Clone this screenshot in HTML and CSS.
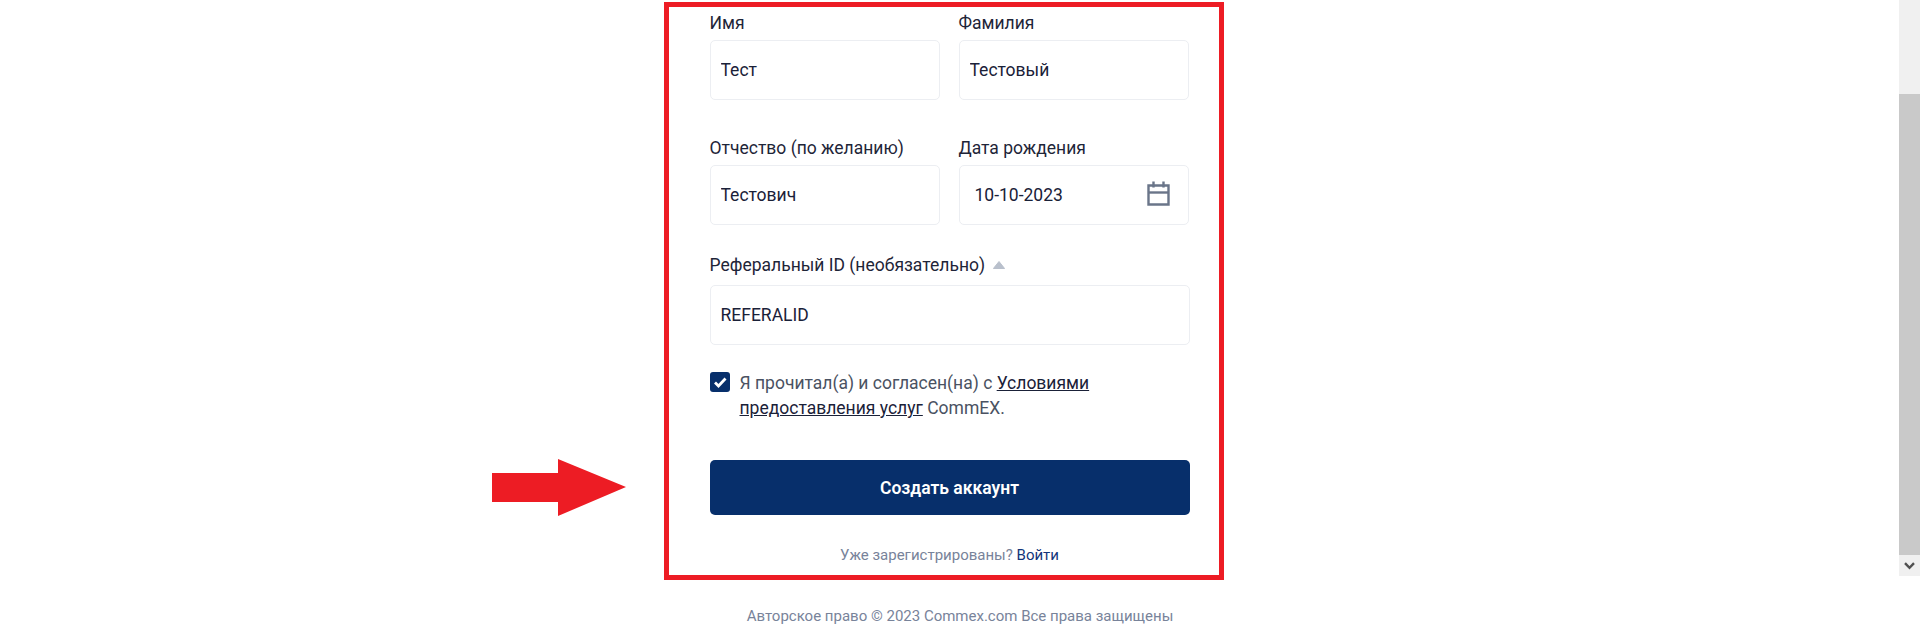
FILE: index.html
```html
<!DOCTYPE html>
<html lang="ru">
<head>
  <meta charset="UTF-8">
  <meta name="viewport" content="width=device-width, initial-scale=1.0">
  <title>Регистрация</title>
  <link rel="stylesheet" href="styles.css">
</head>
<body>

<div class="scroll-area">
  <main class="content">
    <form class="register-form">
      <!-- Name rows -->
      <div class="form-grid">
        <div class="form-group">
          <label for="first-name">Имя</label>
          <input type="text" id="first-name" value="Тест">
        </div>
        <div class="form-group">
          <label for="last-name">Фамилия</label>
          <input type="text" id="last-name" value="Тестовый">
        </div>
        <div class="form-group">
          <label for="middle-name">Отчество (по желанию)</label>
          <input type="text" id="middle-name" value="Тестович">
        </div>
        <div class="form-group">
          <label for="birth-date">Дата рождения</label>
          <div class="date-field">
            <input type="text" id="birth-date" value="10-10-2023">
            <svg class="date-icon" viewBox="0 0 23 25" width="23" height="25" fill="none" stroke="#6a7589" stroke-width="2.4">
              <path d="M1.5 4.5h20v19h-20z"/>
              <path d="M1.5 11.5h20"/>
              <path d="M6.5 0.5v6M16.5 0.5v6"/>
            </svg>
          </div>
        </div>
      </div>

      <!-- Referral -->
      <div class="form-group referral">
        <label for="referral">
          Реферальный ID (необязательно)
          <svg class="caret" viewBox="0 0 12 8" width="12" height="8"><path d="M6 0.5 11.6 7.5H0.4z" fill="#b9c0cc" stroke="#b9c0cc" stroke-linejoin="round"/></svg>
        </label>
        <input type="text" id="referral" value="REFERALID">
      </div>

      <!-- Terms -->
      <div class="terms">
        <span class="checkbox">
          <svg viewBox="0 0 20 20" width="20" height="20" fill="none" stroke="#fff" stroke-width="2.8"><path d="M5 10.5l3.5 3.5L15.5 6.5"/></svg>
        </span>
        <p>Я прочитал(а) и согласен(на) с <a href="#">Условиями<br>предоставления услуг</a> CommEX.</p>
      </div>

      <button type="button" class="btn">Создать аккаунт</button>

      <p class="login-line">Уже зарегистрированы? <a href="#">Войти</a></p>
    </form>
  </main>

  <div class="scrollbar">
    <div class="scrollbar-track"></div>
    <div class="scrollbar-thumb"></div>
    <div class="scrollbar-down">
      <svg viewBox="0 0 11 8" width="11" height="8" fill="none" stroke="#505050" stroke-width="2.4"><path d="M1 1.2 5.5 5.8 10 1.2"/></svg>
    </div>
  </div>
</div>

<footer>Авторское право © 2023 Commex.com Все права защищены</footer>

<!-- Annotation drawn over the page -->
<div class="frame"></div>
<svg class="arrow" viewBox="0 0 134 57" width="134" height="57"><path d="M0 14H66V0L134 28 66 57V43H0z" fill="#ed1c24"/></svg>

</body>
</html>
```

FILE: styles.css
```css
/* General Styling */
html, body {
  height: 100%;
}

body {
  margin: 0;
  font-family: Roboto, sans-serif;
  background: #fff;
  color: #1e2538;
  overflow: hidden;
}

.scroll-area {
  display: flex;
  height: 576px;
  overflow: hidden;
}

.content {
  flex: 1;
  display: flex;
  justify-content: center;
}

.register-form {
  width: 480px;
  padding-top: 11px;
}

/* Fields */
.form-grid {
  display: grid;
  grid-template-columns: 230px 230px;
  column-gap: 19px;
  row-gap: 36px;
}

.form-group label {
  display: block;
  font-size: 17.5px;
  line-height: 24px;
  margin-bottom: 5px;
}

.form-group input {
  display: block;
  box-sizing: border-box;
  width: 100%;
  height: 60px;
  padding: 0 10px;
  border: 1px solid #eceef2;
  border-radius: 5px;
  font-family: inherit;
  font-size: 17.5px;
  color: #1a2138;
  background: #fff;
}

.date-field {
  position: relative;
}

.date-field input {
  padding-left: 15px;
}

.date-icon {
  position: absolute;
  right: 19px;
  top: 16px;
}

.referral {
  margin-top: 28px;
}

.form-group.referral label {
  display: flex;
  align-items: center;
  gap: 8px;
  margin-bottom: 8px;
}

/* Terms checkbox */
.terms {
  display: flex;
  gap: 10px;
  margin-top: 27px;
}

.checkbox {
  flex: none;
  width: 20px;
  height: 20px;
  border-radius: 3px;
  background: #072f6b;
}

.checkbox svg {
  display: block;
}

.terms p {
  margin: -1px 0 0;
  font-size: 17.5px;
  line-height: 25px;
  color: #4a5262;
}

.terms a {
  color: #1a2138;
  text-decoration: underline;
}

/* Button */
.btn {
  display: block;
  width: 100%;
  height: 55px;
  margin-top: 39px;
  border: none;
  border-radius: 5px;
  background: #072f6b;
  color: #fff;
  font-family: inherit;
  font-size: 17.5px;
  font-weight: 600;
}

.login-line {
  margin: 30px 0 0;
  font-size: 15px;
  line-height: 20px;
  text-align: center;
  color: #78839a;
}

.login-line a {
  color: #12357a;
  text-decoration: none;
}

/* Browser scrollbar */
.scrollbar {
  flex: none;
  width: 21px;
  display: flex;
  flex-direction: column;
}

.scrollbar-track {
  height: 94px;
  background: #f0f0f0;
}

.scrollbar-thumb {
  flex: 1;
  background: #c9c9c9;
}

.scrollbar-down {
  height: 21px;
  display: flex;
  align-items: center;
  justify-content: center;
  background: #f0f0f0;
}

footer {
  padding-top: 30px;
  font-size: 15px;
  line-height: 20px;
  text-align: center;
  color: #78839a;
}

/* Red annotation */
.frame {
  position: absolute;
  left: 664px;
  top: 2px;
  width: 560px;
  height: 578px;
  box-sizing: border-box;
  border: 5px solid #ed1c24;
}

.arrow {
  position: absolute;
  left: 492px;
  top: 459px;
}
```
